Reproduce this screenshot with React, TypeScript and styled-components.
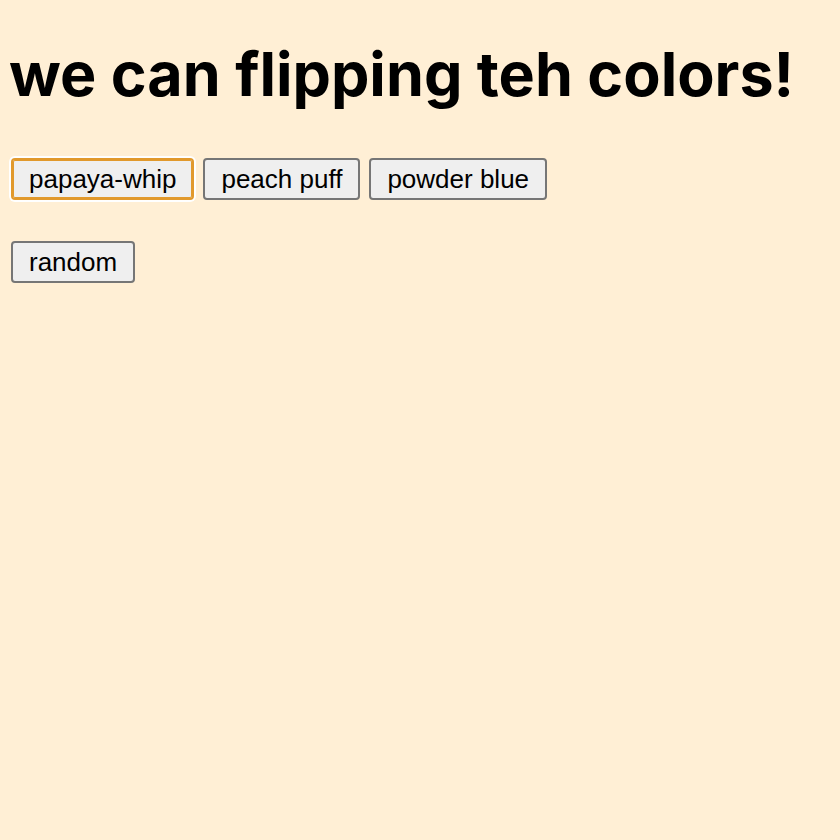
import styled, { createGlobalStyle } from 'styled-components';

const GlobalStyle = createGlobalStyle`
  html, body {
    margin: 0;
    background: papayawhip;
  }
  body {
    min-height: 100vh;
    font-family: "Liberation Sans", Arial, sans-serif;
  }
`;

const Page = styled.main`
  padding: 0 11px;
`;

const Title = styled.h1`
  font-family: Inter, "Noto Sans", sans-serif;
  font-weight: 700;
  font-size: 61px;
  line-height: 73px;
  margin: 0 0 0 -2px;
  padding: 38px 0 47px;
  color: #000;
`;

const ButtonRow = styled.div`
  display: flex;
  gap: 9px;
  margin-bottom: 41px;
`;

const ColorButton = styled.button<{ $active?: boolean }>`
  font-family: "Liberation Sans", Arial, sans-serif;
  font-size: 26px;
  line-height: 30px;
  color: #000;
  background: #efefef;
  border: 2px solid ${(p) => (p.$active ? '#e1992c' : '#767676')};
  border-radius: 4px;
  padding: 4px 16px;
  box-shadow: ${(p) =>
    p.$active ? 'inset 0 0 0 1px #e1992c, 0 0 0 2px #fff' : 'none'};
  cursor: pointer;
`;

export default function App() {
  return (
    <>
      <GlobalStyle />
      <Page>
        <Title>we can flipping teh colors!</Title>
        <ButtonRow>
          <ColorButton $active>papaya-whip</ColorButton>
          <ColorButton>peach puff</ColorButton>
          <ColorButton>powder blue</ColorButton>
        </ButtonRow>
        <ButtonRow>
          <ColorButton>random</ColorButton>
        </ButtonRow>
      </Page>
    </>
  );
}
